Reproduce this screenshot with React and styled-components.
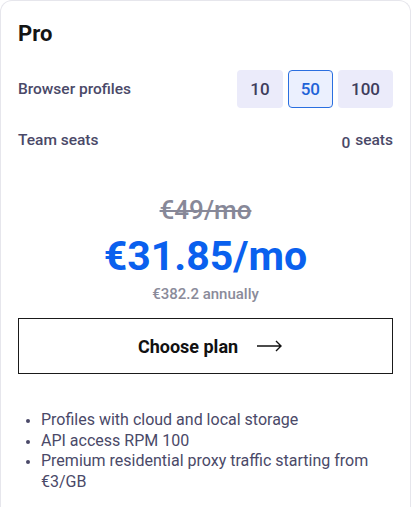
import React, { useState } from 'react';
import styled, { createGlobalStyle } from 'styled-components';

const Global = createGlobalStyle`
  body {
    margin: 0;
    background: #fff;
    font-family: Roboto, "Liberation Sans", sans-serif;
  }
`;

const Card = styled.div`
  width: 411px;
  box-sizing: border-box;
  border: 1px solid #e6e6ec;
  border-bottom: 0;
  border-radius: 12px 12px 0 0;
  padding: 19px 17px 24px 17px;
  min-height: 507px;
`;

const Title = styled.h2`
  margin: 0;
  font-size: 22px;
  line-height: 28px;
  font-weight: 700;
  color: #141414;
`;

const Row = styled.div`
  display: flex;
  align-items: center;
  justify-content: space-between;
  margin-top: ${p => p.$top}px;
`;

const Label = styled.span`
  font-size: 15.5px;
  font-weight: 500;
  color: #4a4968;
`;

const Options = styled.div`
  display: flex;
  gap: 5px;
`;

const Option = styled.button`
  height: 38px;
  min-width: 45px;
  padding: 0 12px;
  box-sizing: border-box;
  border-radius: 4px;
  border: 1px solid ${p => (p.$active ? '#2a6fe0' : 'transparent')};
  background: ${p => (p.$active ? '#ebf0fe' : '#ebebfa')};
  color: ${p => (p.$active ? '#1f63d8' : '#3e3d5c')};
  font-family: inherit;
  font-size: 17px;
  font-weight: 500;
  cursor: pointer;
`;

const Seats = styled.div`
  display: flex;
  align-items: baseline;
  gap: 5px;
  font-size: 15.5px;
  font-weight: 500;
  color: #4a4968;
`;

const SeatCount = styled.span`
  position: relative;
  top: 3px;
`;

const Pricing = styled.div`
  display: flex;
  flex-direction: column;
  align-items: center;
  margin-top: 46px;
`;

const OldPrice = styled.div`
  font-size: 26px;
  line-height: 30px;
  font-weight: 500;
  color: #878898;
  text-decoration: line-through;
`;

const Price = styled.div`
  font-size: 41px;
  line-height: 48px;
  font-weight: 700;
  color: #0a60ee;
  margin-top: 7px;
`;

const Annual = styled.div`
  font-size: 15px;
  line-height: 18px;
  font-weight: 500;
  color: #8a8b9a;
  margin-top: 5px;
`;

const ChooseButton = styled.button`
  display: flex;
  align-items: center;
  justify-content: center;
  gap: 19px;
  width: 100%;
  height: 56px;
  margin-top: 15px;
  padding: 0 0 0 10px;
  background: #fff;
  border: 1.5px solid #1a1a1a;
  font-family: inherit;
  font-size: 18px;
  font-weight: 700;
  color: #111;
  cursor: pointer;
`;

const Features = styled.ul`
  margin: 36px 0 0 0;
  padding-left: 23px;
  font-size: 16px;
  line-height: 20.5px;
  color: #4a4968;
  li::marker {
    font-size: 13px;
  }
`;

const Arrow = () => (
  <svg width="26" height="12" viewBox="0 0 26 12" fill="none">
    <path d="M0 6h24M19 1l5 5-5 5" stroke="#111" strokeWidth="1.4" />
  </svg>
);

export default function App() {
  const [profiles, setProfiles] = useState(50);
  return (
    <>
      <Global />
      <Card>
        <Title>Pro</Title>
        <Row $top={22}>
          <Label>Browser profiles</Label>
          <Options>
            {[10, 50, 100].map(n => (
              <Option key={n} $active={profiles === n} onClick={() => setProfiles(n)}>
                {n}
              </Option>
            ))}
          </Options>
        </Row>
        <Row $top={23}>
          <Label>Team seats</Label>
          <Seats>
            <SeatCount>0</SeatCount>
            <span>seats</span>
          </Seats>
        </Row>
        <Pricing>
          <OldPrice>€49/mo</OldPrice>
          <Price>€31.85/mo</Price>
          <Annual>€382.2 annually</Annual>
        </Pricing>
        <ChooseButton>
          Choose plan
          <Arrow />
        </ChooseButton>
        <Features>
          <li>Profiles with cloud and local storage</li>
          <li>API access RPM 100</li>
          <li>Premium residential proxy traffic starting from €3/GB</li>
        </Features>
      </Card>
    </>
  );
}
